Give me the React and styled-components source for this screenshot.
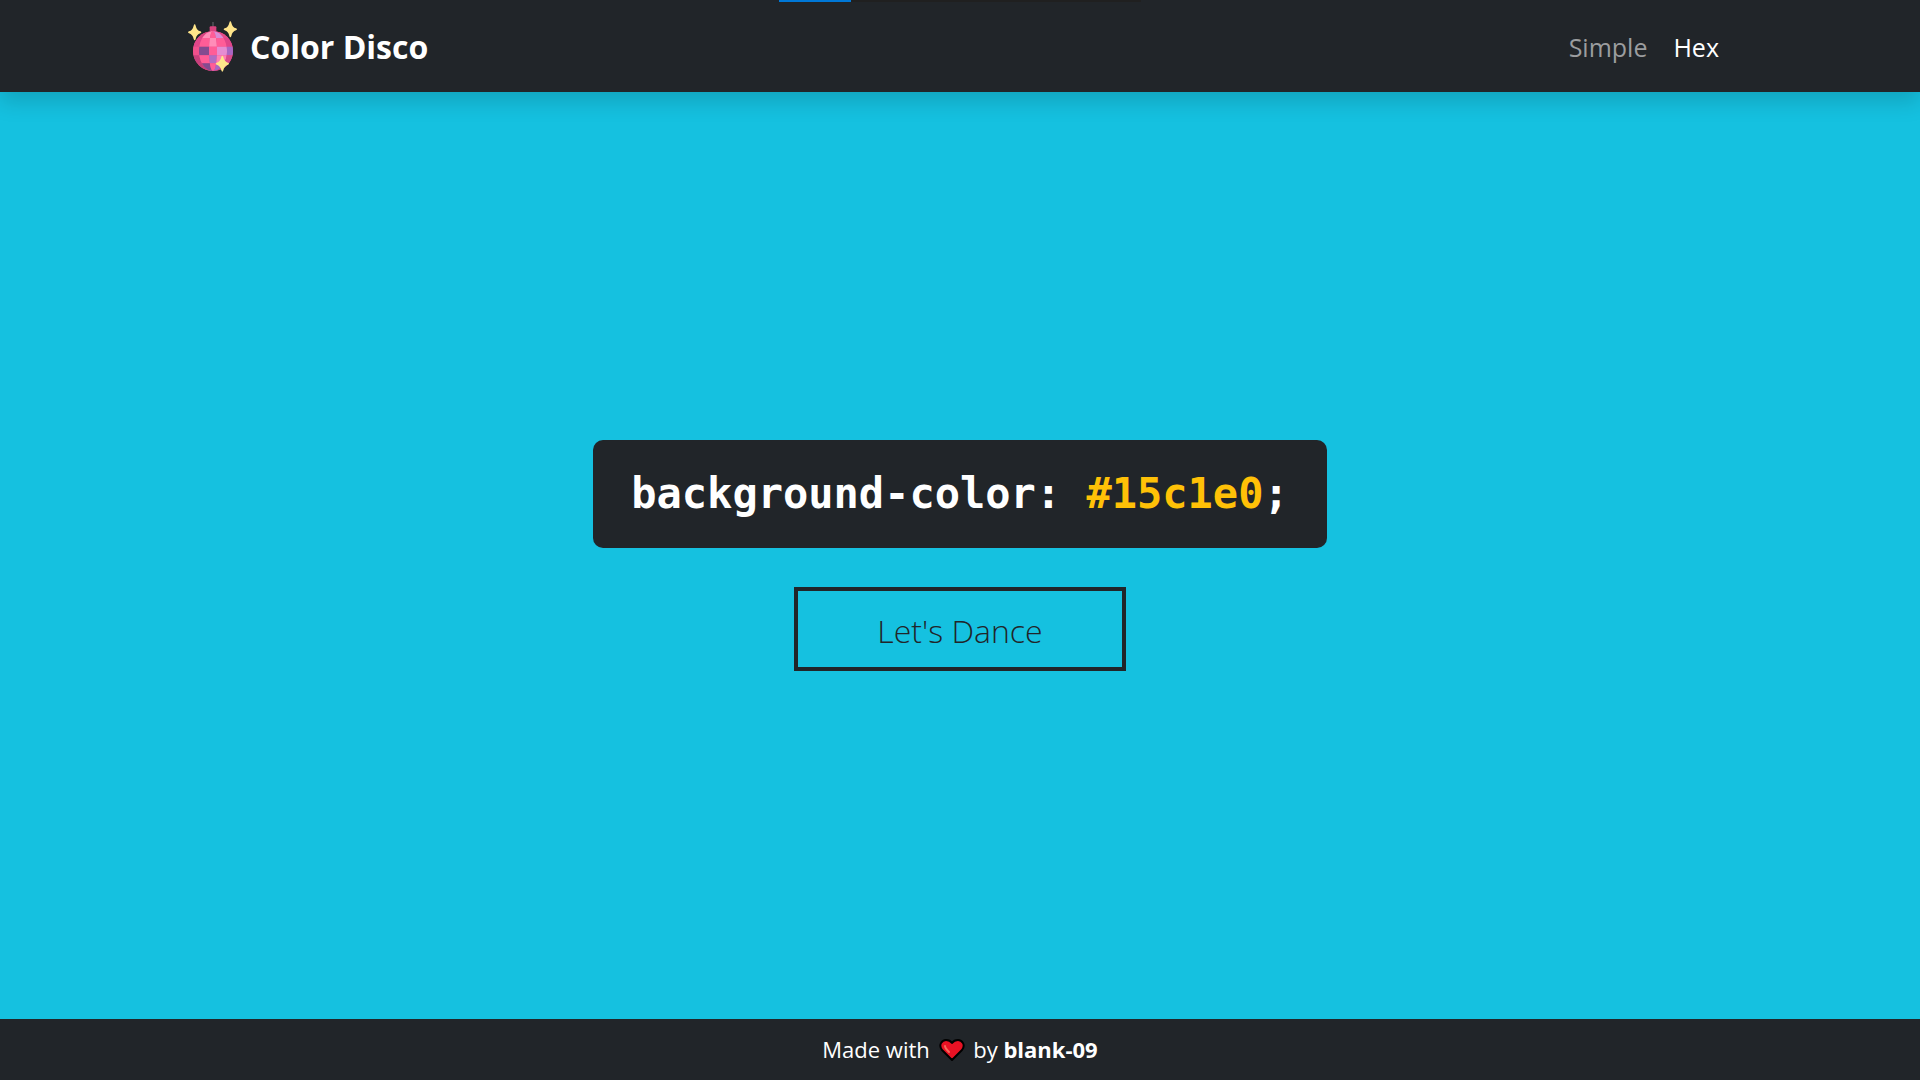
import React, { useState } from "react";
import styled, { createGlobalStyle } from "styled-components";

const dark = "#212529";

const GlobalStyle = createGlobalStyle`
  *, *::before, *::after { box-sizing: border-box; }
  body {
    margin: 0;
    color: #fff;
    font-family: "Segoe UI", "Open Sans", "Noto Sans", sans-serif;
  }
`;

const Page = styled.div`
  display: flex;
  flex-direction: column;
  min-height: 100vh;
  background: ${(p) => p.$color};
`;

const Progress = styled.div`
  position: fixed;
  top: 0;
  left: 50%;
  width: 362px;
  height: 2px;
  transform: translateX(-50%);
  background: #202020;
`;

const ProgressFill = styled.div`
  width: 20%;
  height: 100%;
  background: #0078d7;
`;

const Header = styled.header`
  background: ${dark};
  box-shadow: 0 10px 20px rgba(0, 0, 0, 0.15);
`;

const Container = styled.div`
  display: flex;
  align-items: center;
  justify-content: space-between;
  max-width: 1568px;
  margin: 0 auto;
  padding: 21px 12px 19px;
`;

const Brand = styled.a`
  display: flex;
  align-items: center;
  gap: 12px;
  color: #fff;
  font-size: 32px;
  line-height: 52px;
  font-weight: 700;
  text-decoration: none;

  svg { width: 50px; height: 52px; }
`;

const Nav = styled.nav`
  display: flex;
`;

const NavLink = styled.a`
  padding: 0 13px;
  color: ${(p) => (p.$active ? "#fff" : "#9b9d9f")};
  font-size: 25px;
  line-height: 52px;
  text-decoration: none;
`;

const Main = styled.main`
  flex: 1;
  display: flex;
  flex-direction: column;
  align-items: center;
  justify-content: center;
  gap: 39px;
`;

const CodeCard = styled.code`
  padding: 24px 38px;
  border-radius: 10px;
  background: ${dark};
  font-family: "DejaVu Sans Mono", monospace;
  font-size: 42px;
  line-height: 60px;
  font-weight: 700;
`;

const Value = styled.span`
  color: #ffc107;
`;

const DanceButton = styled.button`
  padding: 14px 79px 10px;
  border: 4px solid ${dark};
  background: transparent;
  color: ${dark};
  font-family: inherit;
  font-size: 32px;
  line-height: 52px;
  font-weight: 300;
  cursor: pointer;
`;

const Footer = styled.footer`
  display: flex;
  align-items: center;
  justify-content: center;
  padding: 12px;
  background: ${dark};
  font-size: 22px;
  line-height: 37px;
  white-space: pre;

  svg { width: 26px; height: 24px; margin: 0 3px; }
`;

const AuthorLink = styled.a`
  color: #fff;
  font-weight: 700;
  text-decoration: none;
`;

const C = { x: 75, y: 90, r: 60 };
const rows = [-60, -39, -13, 13, 37, 60];
const cols = [-60, -42, -12, 12, 42, 60];
const facetColors = [
  ["#d9437f", "#ff8db8", "#ff5d97", "#d98bd5", "#e64b88"],
  ["#e0468a", "#ff5d97", "#ff8db8", "#ff5d97", "#e0468a"],
  ["#f0508c", "#844b90", "#ff5d97", "#e58dd2", "#a767c3"],
  ["#c73f7c", "#ff5d97", "#b06cc4", "#ff7fb5", "#d94a8c"],
  ["#c73f7c", "#844b90", "#ff5d97", "#a767c3", "#c73f7c"],
];

const edge = (k, y) => C.x + k * Math.sqrt(Math.max(0, 1 - (y * y) / (C.r * C.r)));

function facetPath(k1, k2, y1, y2) {
  const ys = [0, 1, 2, 3, 4, 5, 6].map((i) => y1 + ((y2 - y1) * i) / 6);
  const left = ys.map((y) => `${edge(k1, y)},${C.y + y}`);
  const right = ys.map((y) => `${edge(k2, y)},${C.y + y}`).reverse();
  return `M${[...left, ...right].join("L")}Z`;
}

const Star = ({ x, y }) => (
  <path
    transform={`translate(${x} ${y})`}
    fill="#ffe58a"
    d="M0-24Q2-24 3-20Q6-6 17-3Q20-2 20 0Q20 2 17 3Q6 6 3 20Q2 24 0 24Q-2 24-3 20Q-6 6-17 3Q-20 2-20 0Q-20-2-17-3Q-6-6-3-20Q-2-24 0-24Z"
  />
);

function DiscoBall() {
  return (
    <svg viewBox="0 0 150 156" aria-hidden="true">
      <path d="M75 3V20" stroke="#46474c" strokeWidth="6" />
      <rect x="65" y="16" width="20" height="20" rx="3" fill="#d9437f" />
      <circle cx={C.x} cy={C.y} r={C.r} fill="#e64b88" />
      {facetColors.map((line, r) =>
        line.map((fill, c) => (
          <path
            key={`${r}-${c}`}
            fill={fill}
            d={facetPath(cols[c], cols[c + 1], rows[r], rows[r + 1])}
          />
        ))
      )}
      <Star x={20} y={34} />
      <Star x={127} y={25} />
      <Star x={103} y={128} />
    </svg>
  );
}

function Heart() {
  return (
    <svg viewBox="0 0 26 24" aria-hidden="true">
      <path
        d="M13 22L3 12C-1 7 3 2 7 2Q11 2 13 5Q15 2 19 2C23 2 27 7 23 12Z"
        fill="#e81224"
        stroke="#000"
        strokeWidth="2"
        strokeLinejoin="round"
      />
      <path d="M6 8Q6 10 10 14" fill="none" stroke="#f4695a" strokeWidth="2" strokeLinecap="round" />
    </svg>
  );
}

const randomHex = () =>
  "#" + Math.floor(Math.random() * 0x1000000).toString(16).padStart(6, "0");

export default function App() {
  const [color, setColor] = useState("#15c1e0");
  return (
    <Page $color={color}>
      <GlobalStyle />
      <Header>
        <Container>
          <Brand href="#">
            <DiscoBall />
            Color Disco
          </Brand>
          <Nav>
            <NavLink href="#simple">Simple</NavLink>
            <NavLink href="#hex" $active>Hex</NavLink>
          </Nav>
        </Container>
      </Header>
      <Progress>
        <ProgressFill />
      </Progress>
      <Main>
        <CodeCard>
          background-color: <Value>{color}</Value>;
        </CodeCard>
        <DanceButton type="button" onClick={() => setColor(randomHex())}>
          Let's Dance
        </DanceButton>
      </Main>
      <Footer>
        <span>Made with </span>
        <Heart />
        <span> by </span>
        <AuthorLink href="#author">blank-09</AuthorLink>
      </Footer>
    </Page>
  );
}
